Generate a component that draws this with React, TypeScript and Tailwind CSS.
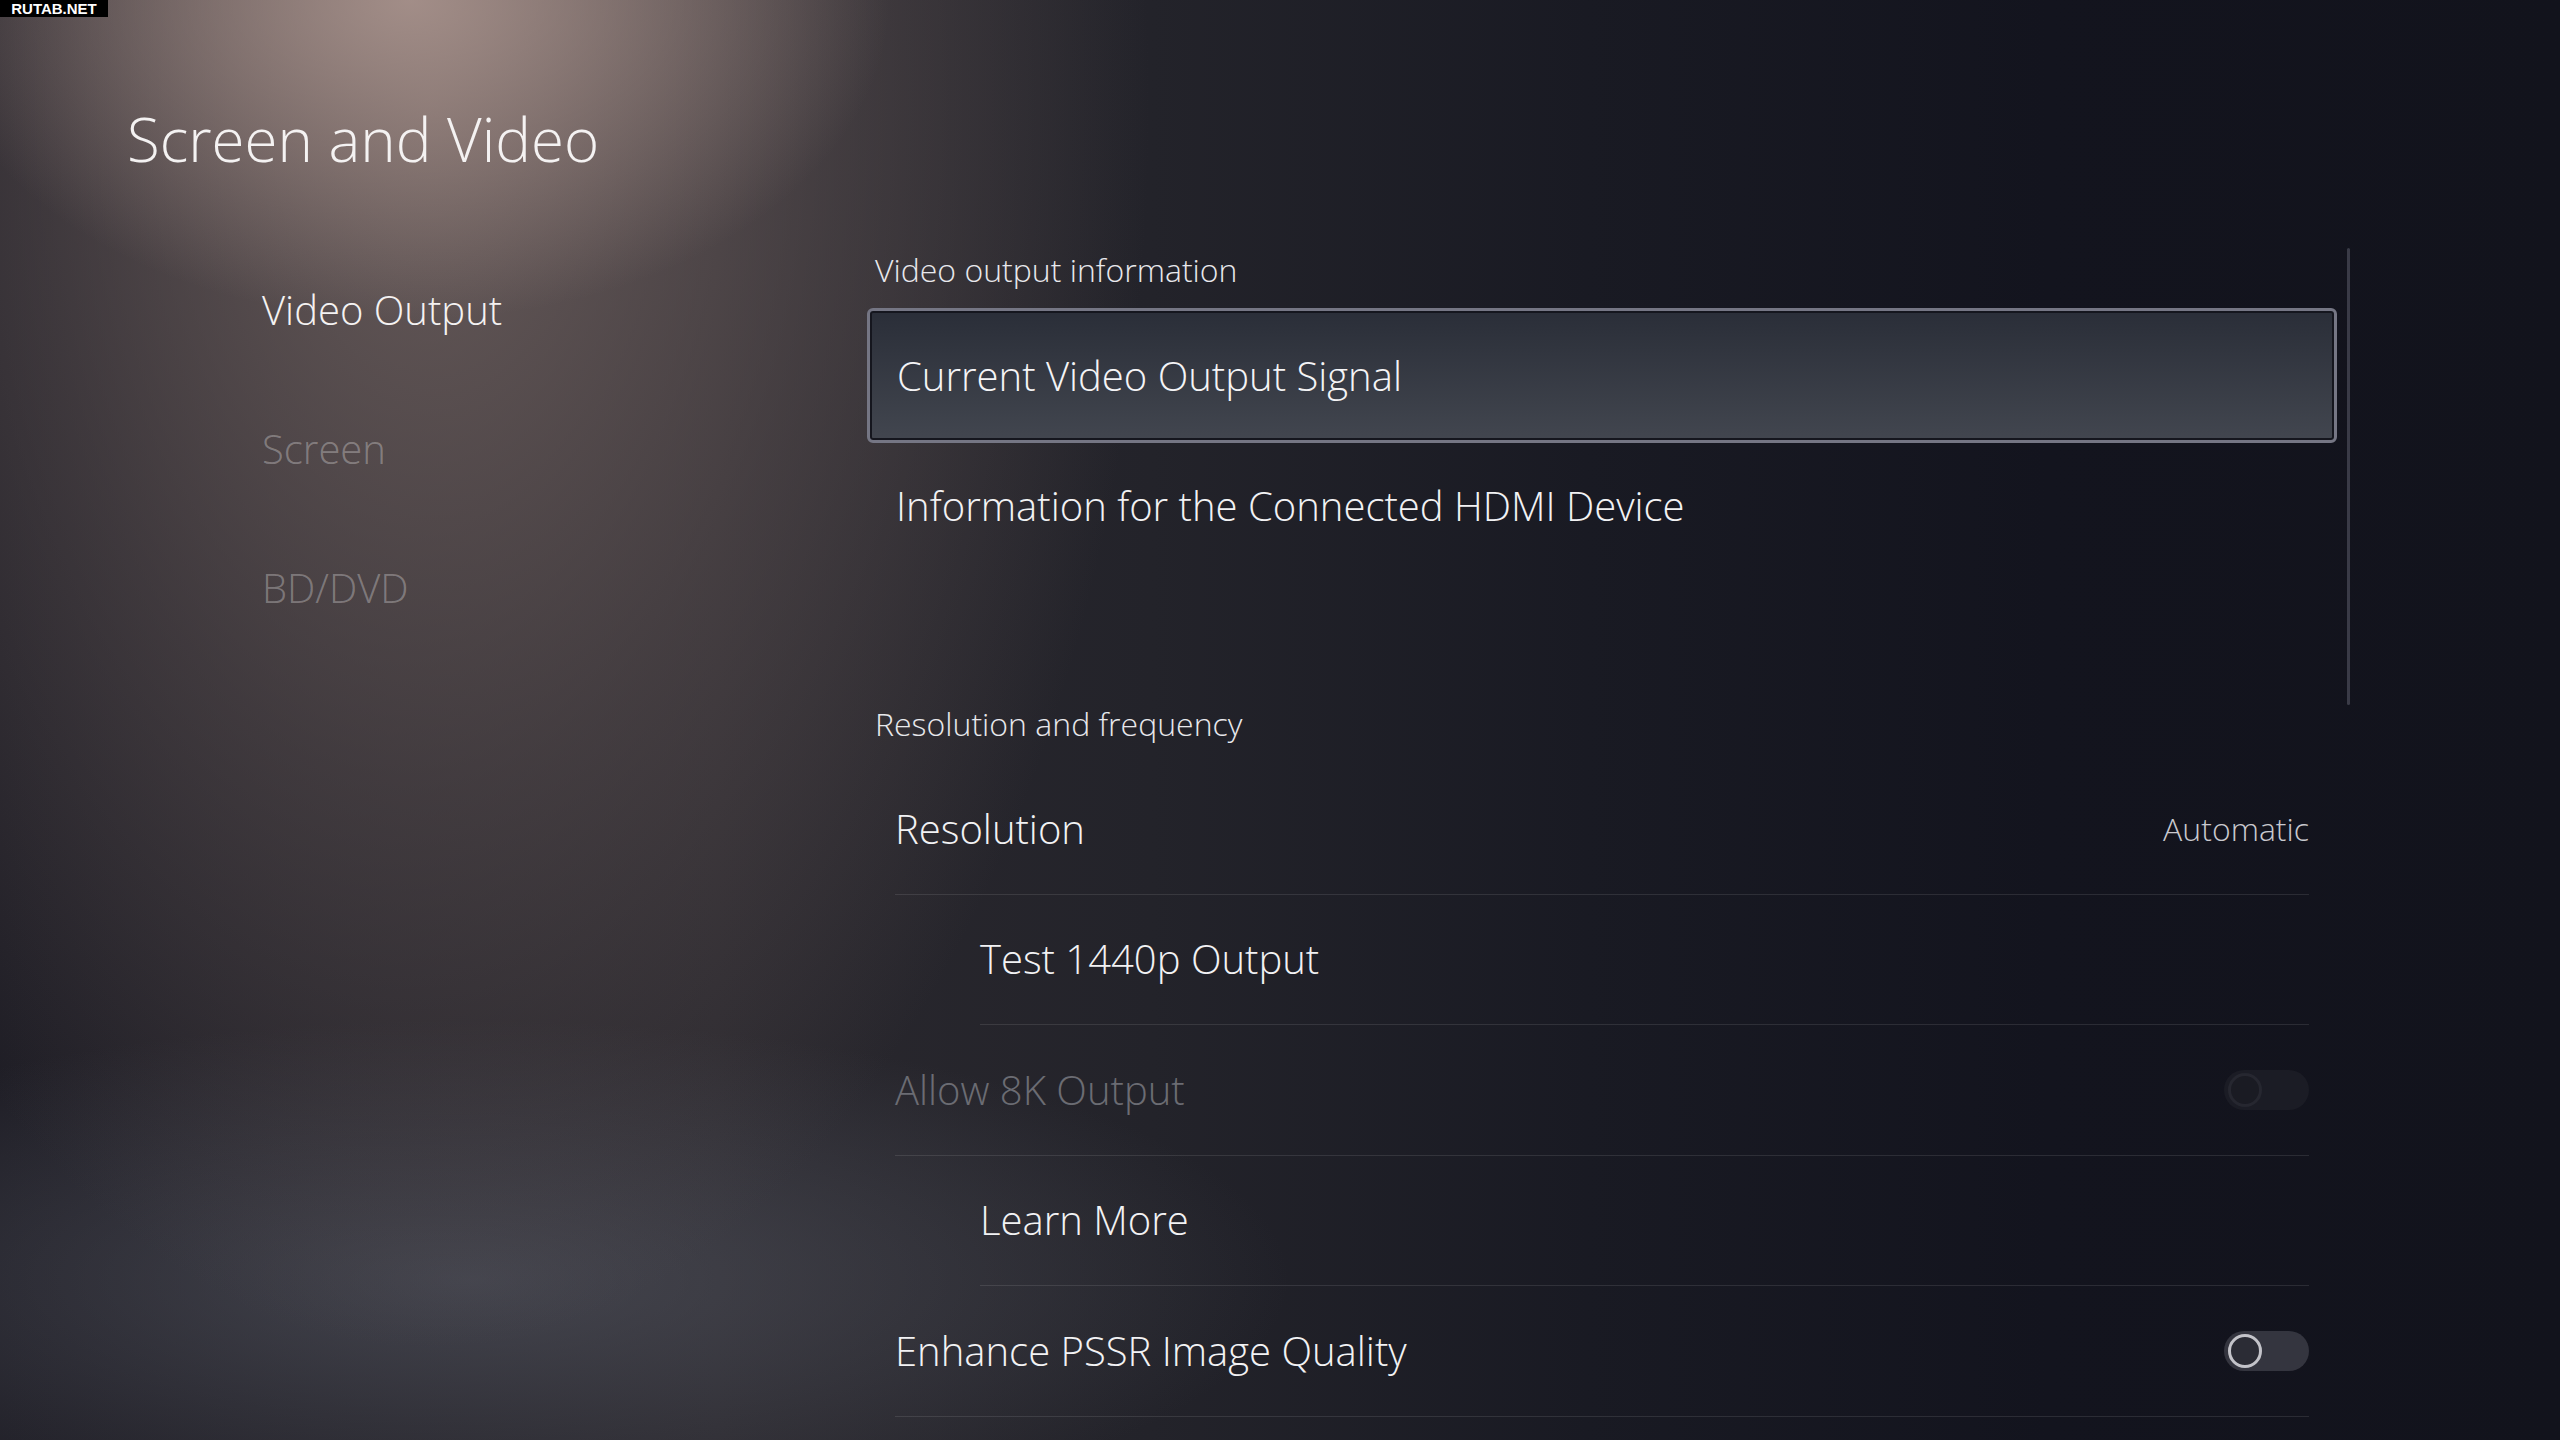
import React from 'react';

type Row = {
    label: string;
    indent?: boolean;
    dim?: boolean;
    value?: string;
    toggle?: 'off' | 'disabled';
};

const rows: Row[] = [
    { label: 'Resolution', value: 'Automatic' },
    { label: 'Test 1440p Output', indent: true },
    { label: 'Allow 8K Output', dim: true, toggle: 'disabled' },
    { label: 'Learn More', indent: true },
    { label: 'Enhance PSSR Image Quality', toggle: 'off' },
];

const navItems = [
    { label: 'Video Output', active: true },
    { label: 'Screen', active: false },
    { label: 'BD/DVD', active: false },
];

const Toggle = ({ disabled }: { disabled?: boolean }) => (
    <div
        className={
            disabled
                ? 'w-[85px] h-[40px] rounded-full bg-[#1b1c25] flex items-center pl-[4px]'
                : 'w-[85px] h-[40px] rounded-full bg-[#34353f] flex items-center pl-[4px]'
        }
    >
        <div
            className={
                disabled
                    ? 'w-[34px] h-[34px] rounded-full border-[3px] border-[#262730] bg-[#1a1b23]'
                    : 'w-[34px] h-[34px] rounded-full border-[3px] border-[#c3c3c9] bg-[#2b2c35]'
            }
        />
    </div>
);

const SettingRow = ({ row }: { row: Row }) => (
    <div
        className={
            'h-[130.5px] flex items-center justify-between border-b border-white/10 ' +
            (row.indent ? 'ml-[85px]' : '')
        }
    >
        <span className={row.dim ? 'text-[40px] font-light leading-none text-[#6b6c73]' : 'text-[40px] font-light leading-none text-[#f2f2f4]'}>
            {row.label}
        </span>
        {row.value && <span className="text-[32px] font-light leading-none text-[#c9c9cf]">{row.value}</span>}
        {row.toggle && <Toggle disabled={row.toggle === 'disabled'} />}
    </div>
);

export default function App() {
    return (
        <div
            className="w-[2560px] h-[1440px] overflow-hidden flex relative bg-[#13141e] bg-[radial-gradient(480px_320px_at_410px_0px,rgba(178,155,148,0.8),transparent_100%),radial-gradient(720px_1250px_at_430px_100px,rgba(112,98,96,0.9),rgba(100,88,88,0.45)_55%,transparent_100%),radial-gradient(820px_260px_at_470px_1280px,rgba(92,95,106,0.55),transparent_100%),linear-gradient(90deg,#1e1d25_0%,#2a282e_28%,#23232a_45%,#191a23_62%,#13141e_80%,#12131c_100%)]"
            style={{ fontFamily: '"Open Sans", "Noto Sans", sans-serif' }}
        >
            <div className="absolute top-0 left-0 w-[108px] h-[17px] bg-black flex items-center justify-center">
                <span className="text-[15px] font-bold leading-none text-white" style={{ fontFamily: '"Liberation Sans", sans-serif' }}>
                    RUTAB.NET
                </span>
            </div>

            {/* left column */}
            <div className="w-[867px] shrink-0 flex flex-col">
                <h1 className="mt-[109px] pl-[127px] text-[60px] font-light leading-none text-[#f4f2f2]">Screen and Video</h1>
                <nav className="mt-[121px] pl-[262px] flex flex-col">
                    {navItems.map((item) => (
                        <div key={item.label} className="h-[139px]">
                            <span className={item.active ? 'text-[40px] font-light leading-none text-[#f4f2f2]' : 'text-[40px] font-light leading-none text-white/30'}>
                                {item.label}
                            </span>
                        </div>
                    ))}
                </nav>
            </div>

            {/* right column */}
            <div className="w-[1470px] shrink-0 flex flex-col pt-[254px]">
                <div className="pl-[8px] h-[32px] text-[32px] font-light leading-none text-[#e8e8ec]">Video output information</div>

                <div className="mt-[22px] h-[135px] rounded-[6px] border-[3px] border-[#757684] shadow-[inset_0_0_0_2px_#15161e] bg-gradient-to-b from-[#2a2e38] to-[#42464f] flex items-center px-[27px]">
                    <span className="text-[40px] font-light leading-none text-[#f4f4f6]">Current Video Output Signal</span>
                </div>

                <div className="h-[126px] flex items-center px-[29px]">
                    <span className="text-[40px] font-light leading-none text-[#f2f2f4]">Information for the Connected HDMI Device</span>
                </div>

                <div className="mt-[139px] pl-[8px] h-[32px] text-[32px] font-light leading-none text-[#e8e8ec]">Resolution and frequency</div>

                <div className="mt-[24px] px-[28px] flex flex-col">
                    {rows.map((row) => (
                        <SettingRow key={row.label} row={row} />
                    ))}
                </div>
            </div>

            {/* scrollbar */}
            <div className="ml-[10px] mt-[248px] w-[3px] h-[457px] rounded-full bg-[#3a3b47]" />
        </div>
    );
}
